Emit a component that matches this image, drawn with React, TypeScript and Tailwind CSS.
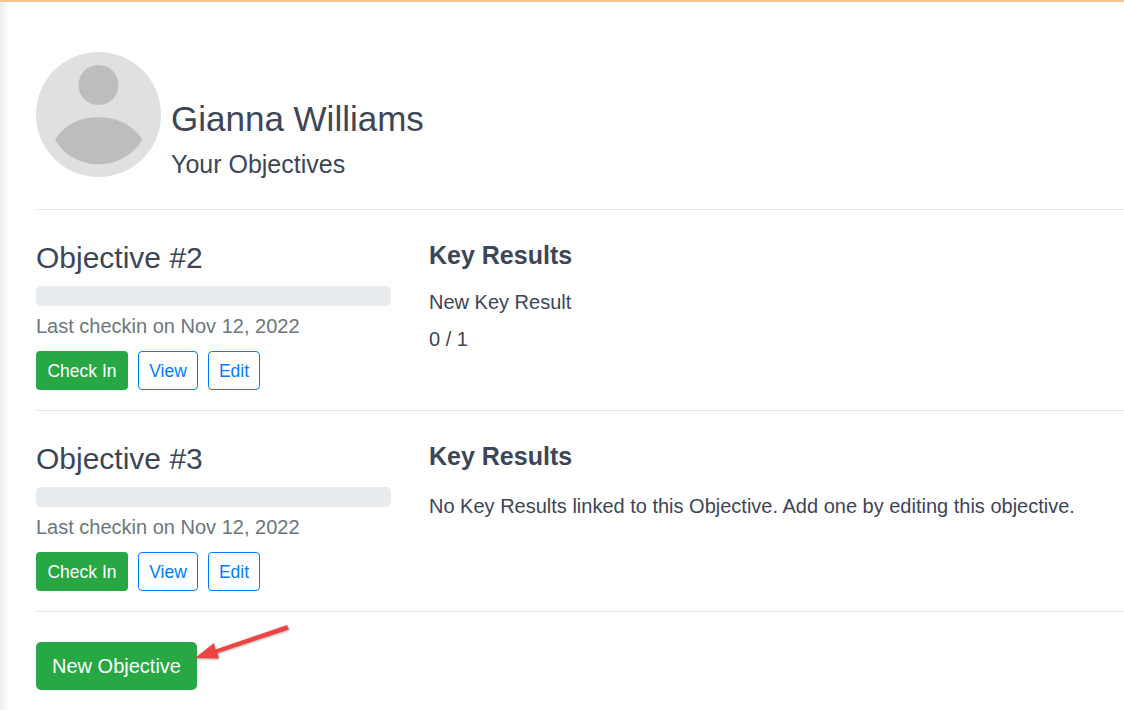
const sans = 'font-["Liberation_Sans",Arial,sans-serif]';

function Avatar() {
  return (
    <svg width="125" height="125" viewBox="0 0 125 125" className="shrink-0">
      <circle cx="62.5" cy="62.5" r="62.5" fill="#e0e0e0" />
      <circle cx="62.5" cy="33" r="20" fill="#bdbdbd" />
      <path
        d="M20 87.500 C30 72.500 46 66 62.500 66 C79 66 95 72.500 105.500 87.500 C96 103 80 111.500 62.500 111.500 C45 111.500 29 103 20 87.500 Z"
        fill="#bdbdbd"
        stroke="#bdbdbd"
        strokeWidth="1.500"
        strokeLinejoin="round"
      />
    </svg>
  );
}

function Objective({ title, children }: { title: string; children: React.ReactNode }) {
  return (
    <section className="flex h-[201px] border-t border-[#e3e5e7]">
      <div className="w-[355px] shrink-0 pt-[29px]">
        <h2 className="text-[30px] leading-[38px] text-[#3c4657]">{title}</h2>
        <div className="mt-[9px] h-[20px] rounded-[5px] bg-[#e9ecef]" />
        <p className="mt-[8px] text-[20px] leading-[24px] text-[#6c757d]">Last checkin on Nov 12, 2022</p>
        <div className="mt-[13px] flex gap-[10px]">
          <button className="h-[39px] w-[92px] rounded-[4px] bg-[#28a745] pt-[1px] text-[17.500px] text-white">Check In</button>
          <button className="h-[39px] w-[60px] rounded-[4px] border border-[#007bff] pt-[1px] text-[17.500px] text-[#007bff]">View</button>
          <button className="h-[39px] w-[52px] rounded-[4px] border border-[#007bff] pt-[1px] text-[17.500px] text-[#007bff]">Edit</button>
        </div>
      </div>
      <div className="ml-[38px] pt-[29px] text-[20px] text-[#3c4657]">
        <h3 className="text-[25px] leading-[33px] font-bold">Key Results</h3>
        {children}
      </div>
    </section>
  );
}

export default function App() {
  return (
    <div className={`${sans} relative h-[710px] w-[1124px] overflow-hidden bg-white`}>
      <div className="h-[2px] bg-[#f0c48f]" />
      <div className="absolute top-[2px] bottom-0 left-0 w-[9px] bg-gradient-to-r from-[#ececec] to-white" />
      <main className="pl-[36px]">
        <header className="flex h-[207px] items-end gap-[10px] pb-[32px] text-[#3c4657]">
          <Avatar />
          <div>
            <h1 className="text-[35px] leading-[40px]">Gianna Williams</h1>
            <p className="mt-[12px] text-[25px] leading-[26px]">Your Objectives</p>
          </div>
        </header>
        <Objective title="Objective #2">
          <p className="mt-[18px] leading-[24px]">New Key Result</p>
          <p className="mt-[13px] leading-[24px]">0 / 1</p>
        </Objective>
        <Objective title="Objective #3">
          <p className="mt-[21px] leading-[24px]">No Key Results linked to this Objective. Add one by editing this objective.</p>
        </Objective>
        <div className="border-t border-[#e3e5e7] pt-[30px]">
          <button className="h-[48px] w-[161px] rounded-[5px] bg-[#28a745] text-[20px] text-white">New Objective</button>
        </div>
      </main>
      {/* annotation arrow over the button */}
      <svg className="absolute top-[620px] left-[190px] drop-shadow-[0_1px_1px_rgba(0,0,0,0.35)]" width="105" height="45" viewBox="0 0 105 45">
        <path d="M5 38 L24 23 L25.500 29.500 L97 5 L99 9.500 L27.500 33 L29 38.500 Z" fill="#ef4444" strokeLinejoin="round" />
      </svg>
    </div>
  );
}
